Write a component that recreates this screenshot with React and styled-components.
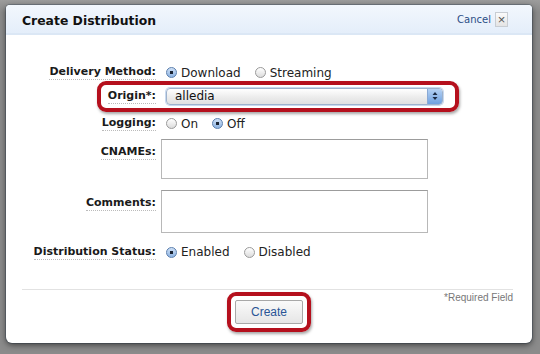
import styled, { createGlobalStyle } from 'styled-components';

const Global = createGlobalStyle`
  html, body { margin: 0; padding: 0; }
  body {
    width: 540px;
    height: 354px;
    overflow: hidden;
    background: #8b8b8b;
    font-family: "DejaVu Sans", Verdana, sans-serif;
  }
`;

const Backdrop = styled.div`
  width: 540px;
  height: 354px;
  padding: 5px 8px 0 6px;
  box-sizing: border-box;
  background:
    linear-gradient(#9c9c9c, #8b8b8b 12px),
    #8b8b8b;
`;

const Dialog = styled.div`
  width: 526px;
  height: 338px;
  background: #fff;
  border-radius: 4px 4px 6px 6px;
  box-shadow: 0 2px 6px rgba(0,0,0,0.55), 0 0 0 1px rgba(60,80,100,0.35);
  display: flex;
  flex-direction: column;
  overflow: hidden;
`;

const Header = styled.div`
  height: 28px;
  flex: none;
  display: flex;
  align-items: center;
  padding: 0 24px 0 16px;
  background: linear-gradient(#f2f7fd, #e4eefa);
  border-bottom: 2px solid #dbe7f5;
`;

const Title = styled.h1`
  margin: 0;
  flex: 1;
  font-size: 12.4px;
  font-weight: bold;
  color: #111;
  padding-top: 2px;
`;

const Cancel = styled.span`
  font-size: 10px;
  color: #2b4e86;
  margin-right: 4px;
`;

const CloseBox = styled.span`
  width: 11px;
  height: 13px;
  border: 1px solid #c8cdd3;
  background: linear-gradient(#fbfbfb, #e4e4e4);
  color: #555;
  font-size: 13px;
  line-height: 13px;
  text-align: center;
  font-family: "Liberation Sans", Arial, sans-serif;
`;

const Form = styled.div`
  padding-top: 26px;
  flex: 1;
`;

const Row = styled.div`
  position: relative;
  display: grid;
  grid-template-columns: 150px 1fr;
  column-gap: 10px;
  align-items: ${p => (p.$top ? 'start' : 'center')};
  height: ${p => p.$h}px;
`;

const Label = styled.div`
  justify-self: end;
  font-size: 11px;
  font-weight: bold;
  color: #1a1a1a;
  border-bottom: 1px dotted #bbb;
  line-height: 14px;
  margin-top: ${p => (p.$top ? '6px' : '0')};
`;

const Options = styled.div`
  display: flex;
  align-items: center;
  gap: 14px;
`;

const Option = styled.label`
  display: flex;
  align-items: center;
  gap: 4px;
  font-size: 12px;
  color: #222;
`;

const Radio = styled.span`
  width: 11px;
  height: 11px;
  border-radius: 50%;
  box-sizing: border-box;
  border: 1px solid ${p => (p.$on ? '#5b7fae' : '#9a9a9a')};
  background: ${p => (p.$on
    ? 'radial-gradient(circle, #1b2433 0 1.6px, transparent 2px), linear-gradient(#cfe0f5, #8db3e2)'
    : 'linear-gradient(#fff, #dcdcdc)')};
`;

const Select = styled.div`
  width: 277px;
  height: 17px;
  box-sizing: border-box;
  border: 1px solid #9eb2cc;
  border-radius: 4px;
  background: linear-gradient(#ffffff, #ececec 55%, #e0e0e0);
  display: flex;
  align-items: center;
  font-size: 12px;
  color: #111;
  padding-left: 8px;
  box-shadow: 0 0 0 1px #c8d9ef;
`;

const SelectText = styled.span`
  flex: 1;
`;

const Arrows = styled.span`
  width: 14px;
  height: 15px;
  border-radius: 0 3px 3px 0;
  background: linear-gradient(#b5d1f3, #6fa1e0);
  border-left: 1px solid #8aa9d4;
  display: flex;
  align-items: center;
  justify-content: center;
`;

const Highlight = styled.div`
  position: absolute;
  left: 91px;
  top: -3px;
  width: 362px;
  height: 31px;
  border: 4px solid #b5101d;
  border-radius: 9px;
  box-shadow: 1px 2px 3px rgba(0,0,0,0.35);
  pointer-events: none;
  box-sizing: border-box;
`;

const TextArea = styled.div`
  width: 267px;
  height: ${p => p.$h}px;
  margin-left: -5px;
  box-sizing: border-box;
  border: 1px solid #b8b8b8;
  border-top-color: #9c9c9c;
  background: #fff;
`;

const Footer = styled.div`
  margin: 0 19px 0 16px;
  border-top: 1px solid #e2e2e2;
  display: flex;
  flex-direction: column;
  align-items: center;
`;

const Required = styled.div`
  align-self: flex-end;
  font-size: 10px;
  color: #777;
  font-family: "Liberation Sans", Arial, sans-serif;
  margin-top: 2px;
  line-height: 12px;
`;

const ButtonFrame = styled.div`
  margin-top: -12px;
  margin-left: 3px;
  padding: 4px;
  border: 4px solid #b5101d;
  border-radius: 9px;
  box-shadow: 1px 2px 3px rgba(0,0,0,0.35);
`;

const Button = styled.div`
  width: 68px;
  height: 24px;
  box-sizing: border-box;
  border: 1px solid #a8a8a8;
  border-radius: 2px;
  background: linear-gradient(#fafafa, #e6e6e6);
  color: #2a5596;
  font-family: "Liberation Sans", Arial, sans-serif;
  font-size: 12px;
  display: flex;
  align-items: center;
  justify-content: center;
`;

const Spacer = styled.div`
  height: 11px;
  flex: none;
`;

export default function App() {
  return (
    <>
      <Global />
      <Backdrop>
        <Dialog>
          <Header>
            <Title>Create Distribution</Title>
            <Cancel>Cancel</Cancel>
            <CloseBox>×</CloseBox>
          </Header>
          <Form>
            <Row $h={23}>
              <Label>Delivery Method:</Label>
              <Options>
                <Option><Radio $on />Download</Option>
                <Option><Radio />Streaming</Option>
              </Options>
            </Row>
            <Row $h={24}>
              <Highlight />
              <Label>Origin*:</Label>
              <Select>
                <SelectText>alledia</SelectText>
                <Arrows>
                  <svg width="6" height="10" viewBox="0 0 6 10">
                    <path d="M3 1 L5.5 4 H0.5 Z M3 9 L5.5 6 H0.5 Z" fill="#1d2c44" />
                  </svg>
                </Arrows>
              </Select>
            </Row>
            <Row $h={31}>
              <Label>Logging:</Label>
              <Options>
                <Option><Radio />On</Option>
                <Option><Radio $on />Off</Option>
              </Options>
            </Row>
            <Row $h={51} $top>
              <Label $top>CNAMEs:</Label>
              <TextArea $h={40} />
            </Row>
            <Row $h={53} $top>
              <Label $top>Comments:</Label>
              <TextArea $h={43} />
            </Row>
            <Row $h={18}>
              <Label>Distribution Status:</Label>
              <Options>
                <Option><Radio $on />Enabled</Option>
                <Option><Radio />Disabled</Option>
              </Options>
            </Row>
          </Form>
          <Footer>
            <Required>*Required Field</Required>
            <ButtonFrame>
              <Button>Create</Button>
            </ButtonFrame>
          </Footer>
          <Spacer />
        </Dialog>
      </Backdrop>
    </>
  );
}
